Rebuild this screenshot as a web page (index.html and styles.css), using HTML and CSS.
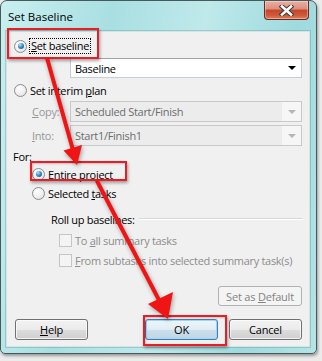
FILE: index.html
```html
<!DOCTYPE html>
<html lang="en">
<head>
    <meta charset="UTF-8">
    <title>Set Baseline</title>
    <link rel="stylesheet" href="styles.css">
</head>
<body>
    <div class="window">
        <div class="titlebar">
            <span class="title">Set Baseline</span>
            <span class="close-btn">
                <svg width="15" height="11" viewBox="0 0 15 11">
                    <path d="M3 1.5 L12 9.5 M12 1.5 L3 9.5" stroke="#3b3b3b" stroke-width="4.6" stroke-linecap="square"/>
                    <path d="M3 1.5 L12 9.5 M12 1.5 L3 9.5" stroke="#ffffff" stroke-width="2.6" stroke-linecap="square"/>
                </svg>
            </span>
        </div>

        <div class="client">
            <div class="row row-first">
                <span class="radio checked"></span>
                <span class="focus"><u>S</u>et baseline</span>
            </div>
            <div class="combo combo-main">
                <span class="combo-text">Baseline</span>
                <span class="combo-arrow"></span>
            </div>

            <div class="row row-interim">
                <span class="radio"></span>
                <span>Set interim <u>p</u>lan</span>
            </div>
            <div class="field-row">
                <span class="field-label"><u>C</u>opy:</span>
                <div class="combo disabled">
                    <span class="combo-text">Scheduled Start/Finish</span>
                    <span class="combo-btn"><span class="combo-arrow"></span></span>
                </div>
            </div>
            <div class="field-row field-into">
                <span class="field-label"><u>I</u>nto:</span>
                <div class="combo disabled">
                    <span class="combo-text">Start1/Finish1</span>
                    <span class="combo-btn"><span class="combo-arrow"></span></span>
                </div>
            </div>

            <div class="row row-for">For:</div>
            <div class="row row-option">
                <span class="radio checked"></span>
                <span><u>E</u>ntire project</span>
            </div>
            <div class="row row-option row-selected">
                <span class="radio"></span>
                <span>Selected <u>t</u>asks</span>
            </div>

            <div class="row row-rollup">
                <span>Roll up baselines:</span>
                <span class="rule"></span>
            </div>
            <div class="row row-check">
                <span class="check"></span>
                <span>To <u>a</u>ll summary tasks</span>
            </div>
            <div class="row row-check row-check2">
                <span class="check"></span>
                <span><u>F</u>rom subtasks into selected summary task(s)</span>
            </div>

            <div class="default-row">
                <button class="btn btn-disabled">Set as <u>D</u>efault</button>
            </div>
            <div class="button-row">
                <button class="btn"><u>H</u>elp</button>
                <button class="btn btn-default">OK</button>
                <button class="btn">Cancel</button>
            </div>
        </div>
    </div>

    <!-- tutorial markup drawn over the dialog -->
    <div class="mark mark-set"></div>
    <div class="mark mark-entire"></div>
    <div class="mark mark-ok"></div>

    <svg class="arrows" width="322" height="361" viewBox="0 0 322 361">
        <line x1="47" y1="58" x2="73" y2="150" stroke="#f01414" stroke-width="4"/>
        <polygon points="77,165 82,145 63.5,150.5" fill="#f01414"/>
        <line x1="97" y1="181" x2="160" y2="302" stroke="#f01414" stroke-width="4"/>
        <polygon points="168,319 173,292 148,304" fill="#f01414"/>
    </svg>
</body>
</html>
```

FILE: styles.css
```css
* {
    box-sizing: border-box;
}

body {
    width: 322px;
    height: 361px;
    margin: 0;
    position: relative;
    overflow: hidden;
    background: #ebebeb;
    font-family: "Open Sans", "Noto Sans", sans-serif;
    font-size: 11px;
    letter-spacing: -0.3px;
    color: #000;
}

u {
    text-decoration-thickness: 1px;
    text-underline-offset: 1px;
}

.window {
    width: 317px;
    height: 354px;
    display: flex;
    flex-direction: column;
    padding: 0 6px 6px 5px;
    border: 1px solid #48595b;
    border-radius: 7px 7px 5px 5px;
    background: linear-gradient(100deg, #c9eff0 0%, #a9dfe2 30%, #bfe9eb 55%, #9fdade 80%, #b4e4e6 100%);
    box-shadow: 1px 2px 3px rgba(0,0,0,0.35);
}

.titlebar {
    height: 30px;
    display: flex;
    align-items: flex-start;
}

.title {
    margin: 8px 0 0 2px;
    font-size: 11.5px;
    letter-spacing: 0;
    line-height: 16px;
}

.close-btn {
    width: 45px;
    height: 19px;
    margin-left: auto;
    margin-right: 1px;
    display: flex;
    align-items: center;
    justify-content: center;
    border: 1px solid #6b2a20;
    border-top: none;
    border-radius: 0 0 4px 4px;
    background: linear-gradient(#eab0a3 0%, #dc8e7c 45%, #c4452b 50%, #cf5a3b 80%, #e0805e 100%);
    box-shadow: inset 0 0 0 1px rgba(255,255,255,0.35);
}

.client {
    flex: 1;
    display: flex;
    flex-direction: column;
    background: #f0f0f0;
    border: 1px solid #d2e4e6;
    box-shadow: 0 0 0 1px rgba(60,110,115,0.25);
}

.row {
    display: flex;
    align-items: center;
    height: 18px;
    white-space: nowrap;
}

.radio {
    width: 13px;
    height: 13px;
    margin-right: 3px;
    border-radius: 50%;
    border: 1px solid #8a8d90;
    background: radial-gradient(circle at 40% 35%, #ffffff 0%, #eeeeee 55%, #d6d6d6 100%);
    position: relative;
    flex-shrink: 0;
}

.radio.checked::after {
    content: "";
    position: absolute;
    left: 2.5px;
    top: 2.5px;
    width: 6px;
    height: 6px;
    border-radius: 50%;
    background: radial-gradient(circle at 35% 30%, #b9e6fb 0%, #3b8fcb 45%, #0c4575 100%);
}

.check {
    width: 13px;
    height: 13px;
    margin-right: 3px;
    border: 1px solid #c3c6c8;
    background: #f4f4f4;
    flex-shrink: 0;
}

.row-first {
    height: 20px;
    margin-top: 4px;
    padding-left: 7px;
}

.focus {
    margin-left: -1px;
    padding: 0 1px;
    border: 1px dotted #000;
    line-height: 14px;
}

.combo {
    display: flex;
    align-items: center;
    height: 20px;
    border: 1px solid #c5cdd5;
    border-top-color: #a0a4aa;
    background: #fff;
}

.combo-main {
    margin: 2px 7px 0 63px;
    padding: 0 5px 0 4px;
}

.combo-text {
    flex: 1;
}

.combo-arrow {
    width: 0;
    height: 0;
    border-left: 4px solid transparent;
    border-right: 4px solid transparent;
    border-top: 4px solid #000;
}

.row-interim {
    height: 20px;
    margin-top: 2px;
    padding-left: 7px;
}

.field-row {
    display: flex;
    align-items: center;
    height: 21px;
    margin-top: 1px;
    padding-right: 7px;
}

.field-into {
    margin-top: 3px;
}

.field-label {
    width: 63px;
    padding-left: 25px;
    color: #969696;
}

.combo.disabled {
    flex: 1;
    height: 21px;
    border-color: #c9c9c9;
    background: #ececec;
    color: #6d6d6d;
}

.combo.disabled .combo-text {
    padding-left: 4px;
}

.combo-btn {
    width: 19px;
    height: 100%;
    display: flex;
    align-items: center;
    justify-content: center;
    background: #f6f6f6;
}

.combo.disabled .combo-arrow {
    border-top-color: #b4b4b4;
}

.row-for {
    margin-top: 1px;
    padding-left: 6px;
}

.row-option {
    padding-left: 25px;
}

.row-selected {
    margin-top: 1px;
}

.row-rollup {
    margin-top: 8px;
    padding: 0 6px 0 44px;
}

.rule {
    flex: 1;
    height: 2px;
    margin-left: 4px;
    border-top: 1px solid #d5d9dd;
    border-bottom: 1px solid #fff;
}

.row-check {
    margin-top: 3px;
    padding-left: 52px;
    color: #8d8d8d;
}

.row-check2 {
    margin-top: 2px;
}

.default-row {
    display: flex;
    justify-content: flex-end;
    height: 20px;
    margin-top: 17px;
    padding-right: 7px;
}

.button-row {
    display: flex;
    gap: 11px;
    height: 21px;
    margin-top: 13px;
    padding: 0 7px 0 8px;
}

.btn {
    width: 73px;
    height: 21px;
    padding: 0;
    font-family: inherit;
    font-size: 11px;
    letter-spacing: -0.2px;
    color: #000;
    border: 1px solid #707070;
    border-radius: 3px;
    background: linear-gradient(#f2f2f2 0%, #ebebeb 50%, #dddddd 51%, #cfcfcf 100%);
    box-shadow: inset 0 0 0 1px rgba(255,255,255,0.7);
}

.button-row .btn-default {
    margin-left: auto;
    border-color: #3c7fb1;
    background: linear-gradient(#eef6fb 0%, #e0ecf4 50%, #ccdfeb 51%, #bed7e7 100%);
    box-shadow: inset 0 0 0 1px #9fd5f5;
}

.btn-disabled {
    width: 84px;
    height: 20px;
    color: #838383;
    border-color: #adb2b5;
    background: #f4f4f4;
    box-shadow: none;
}

.mark {
    position: absolute;
    border: 2px solid #ea1c24;
    box-shadow: 1px 2px 3px rgba(0,0,0,0.35), inset 1px 1px 2px rgba(0,0,0,0.2);
}

.mark-set {
    left: 7px;
    top: 28px;
    width: 92px;
    height: 31px;
}

.mark-entire {
    left: 30px;
    top: 161px;
    width: 97px;
    height: 20px;
}

.mark-ok {
    left: 143px;
    top: 315px;
    width: 84px;
    height: 31px;
}

.arrows {
    position: absolute;
    left: 0;
    top: 0;
    pointer-events: none;
    filter: drop-shadow(1px 2px 2px rgba(0,0,0,0.35));
}
```
